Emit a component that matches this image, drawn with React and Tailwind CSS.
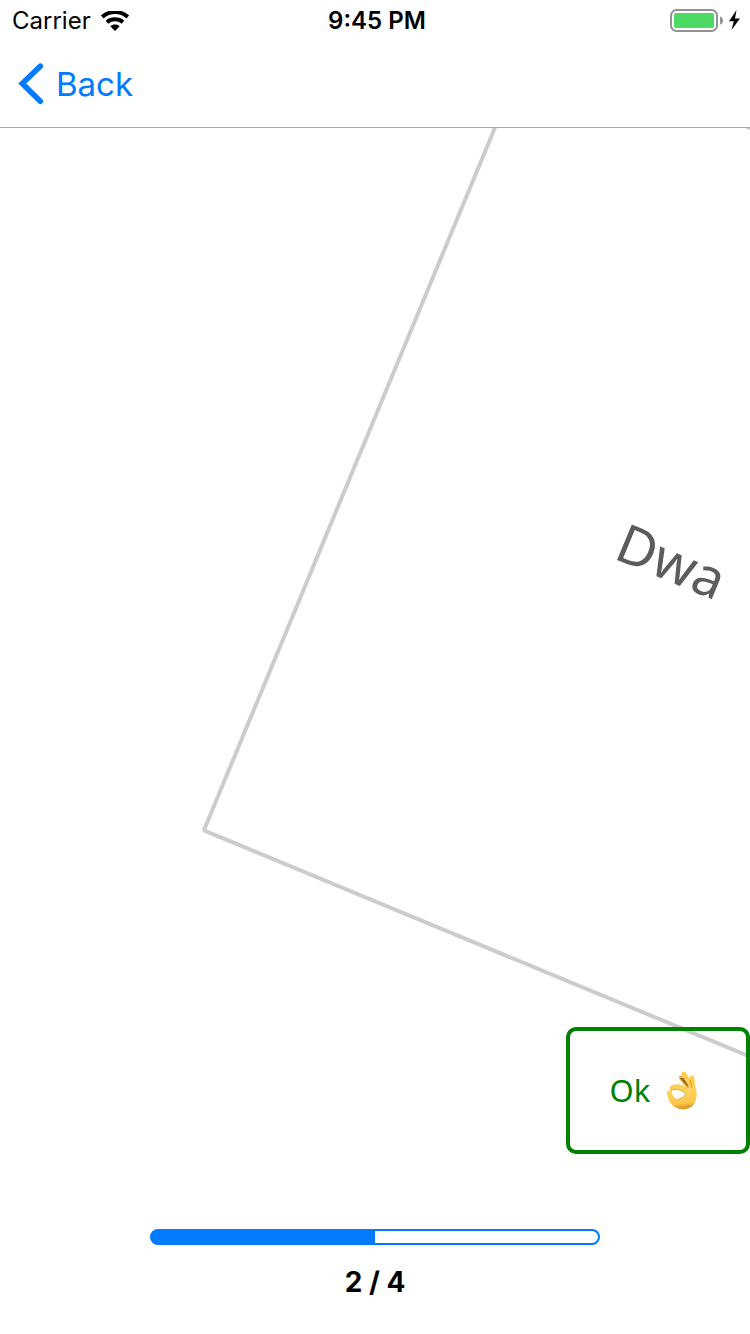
import React from "react";

function WifiIcon() {
  return (
    <svg aria-hidden="true" className="h-5 w-7" viewBox="0 0 28 20" fill="none">
      <path d="M1.200 5.900C8.500 -0.600 19.500 -0.600 26.800 5.900" stroke="black" strokeWidth="4" />
      <path d="M6 11.200C10.500 7.400 17.500 7.400 22 11.200" stroke="black" strokeWidth="4" />
      <path d="M9.300 15.200C12 12.900 16 12.900 18.700 15.200L14 20Z" fill="black" />
    </svg>
  );
}

function BatteryIcon() {
  return (
    <svg aria-hidden="true" className="h-6 w-[72px]" viewBox="0 1 72 24">
      <rect x="1" y="2" width="46" height="21" rx="5.5" fill="white" stroke="#929292" strokeWidth="2" />
      <rect x="4" y="5" width="40" height="15" rx="2" fill="#4cd964" />
      <path d="M50 8.5C54 9.5 54 15.5 50 16.5Z" fill="#929292" />
      <path d="M66.5 2L59 13.2H63.8L61.5 22L70 10.5H65Z" fill="black" />
    </svg>
  );
}

function OkHand() {
  return (
    <svg role="img" aria-label="OK hand" className="h-10 w-8" viewBox="0 0 32 40">
      <defs>
        <linearGradient id="skin" x1="0" y1="0" x2="0.1" y2="1">
          <stop offset="0" stopColor="#fbc84f" />
          <stop offset="0.6" stopColor="#ffd35c" />
          <stop offset="0.88" stopColor="#fbc54a" />
          <stop offset="1" stopColor="#dd9a2e" />
        </linearGradient>
      </defs>
      <path d="M13.500 4.800C15 3.800 17 5 18 7L25 17L21 17.500L14 9C13 7.500 12.700 5.800 13.500 4.800Z" fill="#f0b73f" />
      <path d="M13.500 7L17.500 7L24.500 17.500L20.500 14.500Z" fill="#9c6817" />
      <path
        fillRule="evenodd"
        fill="url(#skin)"
        d="M15.500 2.500C16 -0.300 19 -0.300 20.500 2.500L24.300 9C23 6.800 23.500 4.800 25.500 4.500C27.800 4.400 28.500 6.500 28.700 9C29 12.500 29.500 15 30 17.500C31 21 31.200 24.500 30 27.500C29.500 33 25 38.500 16.500 38.500C8 38 2.500 31.500 1.500 24.500C0.800 22.500 0.500 20 2.300 19.500L4.500 19.500C2.800 17.500 3.500 14.800 6.500 14C12 12.300 18 13.800 22.500 18.300C23 16 22.300 14 21 12L16.300 5C15.500 4 15.200 3.300 15.500 2.500ZM5.800 19.800C6 25 9 28 12.500 28C16 27 18.800 25.500 19.500 23.200C16.500 20 11.500 17.800 5.800 19.800Z"
      />
      <path d="M4.500 19.500C9 17 15 18 19.500 23.200M19.500 23.200C19 25.500 16 27 12.500 28" fill="none" stroke="#dda034" strokeWidth="0.8" />
      <path d="M24.300 9C25.300 12 25.600 14.500 25.200 17" fill="none" stroke="#cf8c22" strokeWidth="0.9" />
    </svg>
  );
}

export default function App() {
  const current = 2;
  const total = 4;
  const percent = (current / total) * 100;

  return (
    <div className="flex min-h-screen flex-col bg-white font-['Inter','Liberation_Sans',sans-serif] text-black">
      <header className="border-b border-[#a7a7aa]">
        <div className="grid h-10 grid-cols-3 items-center pt-0.5 pr-2 pl-3 text-2xl">
          <div className="flex items-center gap-2.5">
            <span>Carrier</span>
            <WifiIcon />
          </div>
          <div className="text-center font-semibold">9:45 PM</div>
          <div className="flex justify-end">
            <BatteryIcon />
          </div>
        </div>
        <nav className="flex h-[87px] items-center pl-[18px]">
          <button type="button" className="flex items-center gap-3 text-[33px] leading-10 text-[#007aff]">
            <svg aria-hidden="true" className="h-[42px] w-[26px]" viewBox="0 0 26 42" fill="none" stroke="currentColor" strokeWidth="5.6" strokeLinecap="round">
              <path d="M22.300 3.300L4.300 20.500L22.300 38.200" />
            </svg>
            Back
          </button>
        </nav>
      </header>

      <main className="relative flex flex-1 flex-col overflow-hidden">
        <section className="flex h-[863px] items-center justify-center">
          <article className="flex h-[862px] w-[662px] max-w-[89%] translate-x-[297px] rotate-[22.5deg] items-center justify-center rounded border-4 border-[#cccccc] font-['Noto_Sans',sans-serif] text-[54px] text-[#5c5c5c]">
            Dwa
          </article>
        </section>

        <div className="relative mt-9 flex justify-end">
          <button
            type="button"
            className="flex h-[127px] w-[184px] items-center justify-center gap-4 rounded-[10px] border-4 border-[#008000] pr-2 font-['Noto_Sans',sans-serif] text-[31px] text-[#008000]"
          >
            Ok
            <OkHand />
          </button>
        </div>

        <footer className="mt-[75px] flex flex-col items-center gap-4 pb-8">
          <div
            role="progressbar"
            aria-label="Cards completed"
            aria-valuemin={0}
            aria-valuemax={total}
            aria-valuenow={current}
            className="h-4 w-3/5 rounded-full border-2 border-[#007aff] bg-origin-border"
            style={{ backgroundImage: `linear-gradient(to right, #007aff ${percent}%, #ffffff ${percent}%)` }}
          />
          <p className="text-[28px] leading-[42px] font-bold">
            {current} / {total}
          </p>
        </footer>
      </main>
    </div>
  );
}
